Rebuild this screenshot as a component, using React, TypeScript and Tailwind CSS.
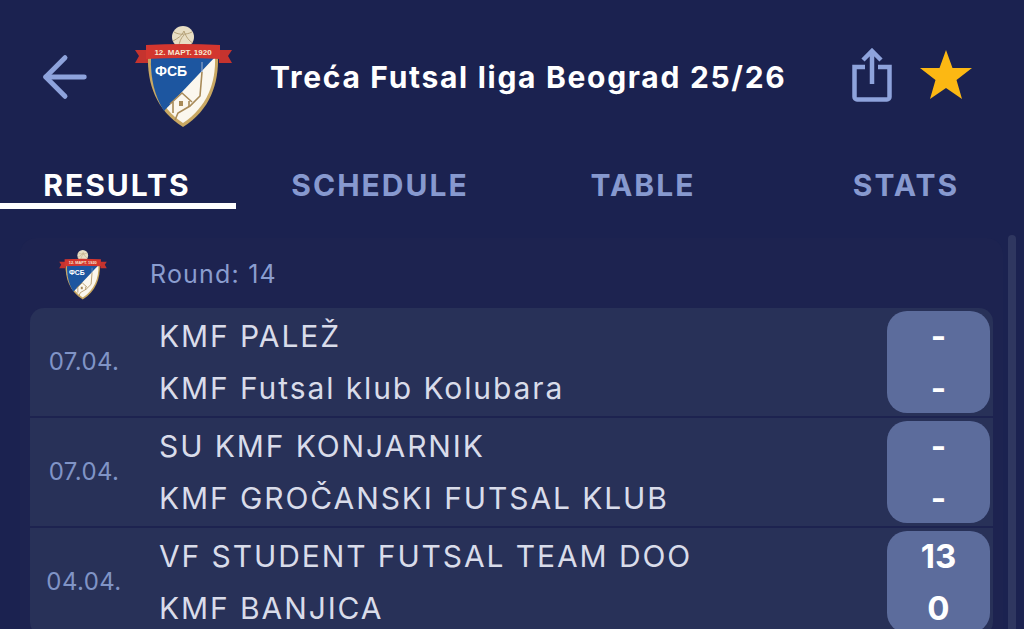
import { ArrowLeft } from "lucide-react";

const MATCHES = [
  { date: "07.04.", home: "KMF PALEŽ", away: "KMF Futsal klub Kolubara", homeScore: "-", awayScore: "-" },
  { date: "07.04.", home: "SU KMF KONJARNIK", away: "KMF GROČANSKI FUTSAL KLUB", homeScore: "-", awayScore: "-" },
  { date: "04.04.", home: "VF STUDENT FUTSAL TEAM DOO", away: "KMF BANJICA", homeScore: "13", awayScore: "0" },
];

const TABS = ["RESULTS", "SCHEDULE", "TABLE", "STATS"];

function Crest({ className }: { className?: string }) {
  return (
    <svg viewBox="0 0 97 102" className={className}>
      {/* ball */}
      <circle cx="48" cy="11" r="11" fill="#e8dec4" />
      <path d="M39 6c5 3 12 3 18 0M38 15c5-3 9-5 11-10M49 5c2 6 5 10 9 12M44 21c0-5 2-9 5-12" stroke="#b09c72" strokeWidth="0.9" fill="none" />
      {/* shield */}
      <path d="M13 29H83C84 58 75 84 48 101C21 84 12 58 13 29Z" fill="#c9a862" />
      <path d="M16 31H80C81 57 72 81 48 97C24 81 15 57 16 31Z" fill="#fbf7ee" />
      <path d="M16 31H80L29 85C20 71 15 52 16 31Z" fill="#1d56a0" />
      {/* ribbon */}
      <path d="M0 24H13V37H0L4 30Z" fill="#c5332e" />
      <path d="M97 24H84V37H97L93 30Z" fill="#c5332e" />
      <path d="M11 19Q48 17 85 19V33Q48 31 11 33Z" fill="#d3362f" />
      <text x="48" y="29" textAnchor="middle" fontSize="8" fontWeight="700" fill="#f6e8d0" fontFamily="'Liberation Sans', sans-serif">12. МАРТ. 1920</text>
      <text x="36" y="50" textAnchor="middle" fontSize="14" fontWeight="700" fill="#ffffff" fontFamily="'Liberation Sans', sans-serif">ФСБ</text>
      {/* tower, house and stairs */}
      <path d="M67 36V46" stroke="#8fa4c4" strokeWidth="1.2" />
      <path d="M67 46L65 70L55 80L43 87L40 94" stroke="#a88a58" strokeWidth="1.6" fill="none" />
      <path d="M35 78L47 67L57 76M38 76V87M54 75V81" stroke="#a88a58" strokeWidth="1.6" fill="none" />
      <rect x="44" y="75" width="4" height="5" fill="#a88a58" />
    </svg>
  );
}

function MatchRow({ date, home, away, homeScore, awayScore }: (typeof MATCHES)[number]) {
  return (
    <div className="flex h-[108px] items-center bg-[#283158] pr-[3px]">
      <div className="mr-[21px] w-[108px] text-center text-[24px] tracking-[0.4px] text-[#8094c6]">{date}</div>
      <div className="flex h-full flex-1 flex-col justify-center gap-[19px] text-[30px] leading-[33px] tracking-[1.9px] text-[#d9dcea]">
        <div>{home}</div>
        <div>{away}</div>
      </div>
      <div className="flex h-[102px] w-[103px] flex-col items-center justify-center gap-[19px] rounded-[20px] bg-[#5c6c9c] text-[33px] leading-[33px] font-bold text-white">
        <div>{homeScore}</div>
        <div>{awayScore}</div>
      </div>
    </div>
  );
}

export default function App() {
  return (
    <div className="h-[629px] w-[1024px] overflow-hidden bg-[#1b2250] font-['Inter',sans-serif]">
      {/* header */}
      <div className="flex h-[155px] items-start pt-[26px]">
        <ArrowLeft className="mt-[18px] ml-[32px] h-[66px] w-[66px] text-[#8ea3dc]" strokeWidth={1.8} />
        <Crest className="ml-[37px] h-[102px] w-[97px]" />
        <h1 className="mt-[31px] ml-[38px] text-[30px] leading-[40px] font-bold tracking-[1.7px] whitespace-nowrap text-white">Treća Futsal liga Beograd 25/26</h1>
        <svg viewBox="0 0 40 54" className="mt-[22px] ml-[66px] h-[54px] w-[40px] shrink-0 text-[#8ea3dc]" fill="none" stroke="currentColor" strokeWidth="4.5">
          <path d="M13 19H2.5V49A2.5 2.5 0 0 0 5 51.5H35A2.5 2.5 0 0 0 37.5 49V19H26" />
          <path d="M20 36V3M11 12L20 3L29 12" />
        </svg>
        <svg viewBox="0 0 52 50" className="mt-[24px] ml-[28px] h-[50px] w-[52px] shrink-0">
          <path d="M26 0L32.5 18H52L36.5 30L42 49L26 38L10 49L15.5 30L0 18H19.5Z" fill="#fcb813" />
        </svg>
      </div>

      {/* tabs */}
      <div className="flex h-[54px] gap-[29px] text-[30px] font-bold tracking-[2px]">
        {TABS.map((tab, i) => (
          <div key={tab} className={i === 0 ? "relative w-[234px] pt-[12px] text-center leading-[36px] text-white" : "w-[234px] pt-[12px] text-center leading-[36px] text-[#8799cf]"}>
            {tab}
            {i === 0 && <div className="absolute top-[48px] left-0 h-[6px] w-[236px] bg-white" />}
          </div>
        ))}
      </div>

      {/* results */}
      <div className="relative mt-[29px] ml-[20px] w-[983px] rounded-t-[16px] bg-[#1d2350] px-[10px]">
        <div className="flex h-[70px] items-center pt-[3px]">
          <Crest className="ml-[28px] h-[50px] w-[50px]" />
          <span className="ml-[42px] text-[25px] tracking-[1.2px] text-[#8a9dcf]">Round: 14</span>
        </div>
        <div className="flex flex-col gap-[2px] overflow-hidden rounded-[14px]">
          {MATCHES.map((m) => (
            <MatchRow key={m.home} {...m} />
          ))}
        </div>
        <div className="absolute top-[-3px] right-[-13px] h-[400px] w-[8px] rounded-full bg-[#2f3760]" />
      </div>
    </div>
  );
}
